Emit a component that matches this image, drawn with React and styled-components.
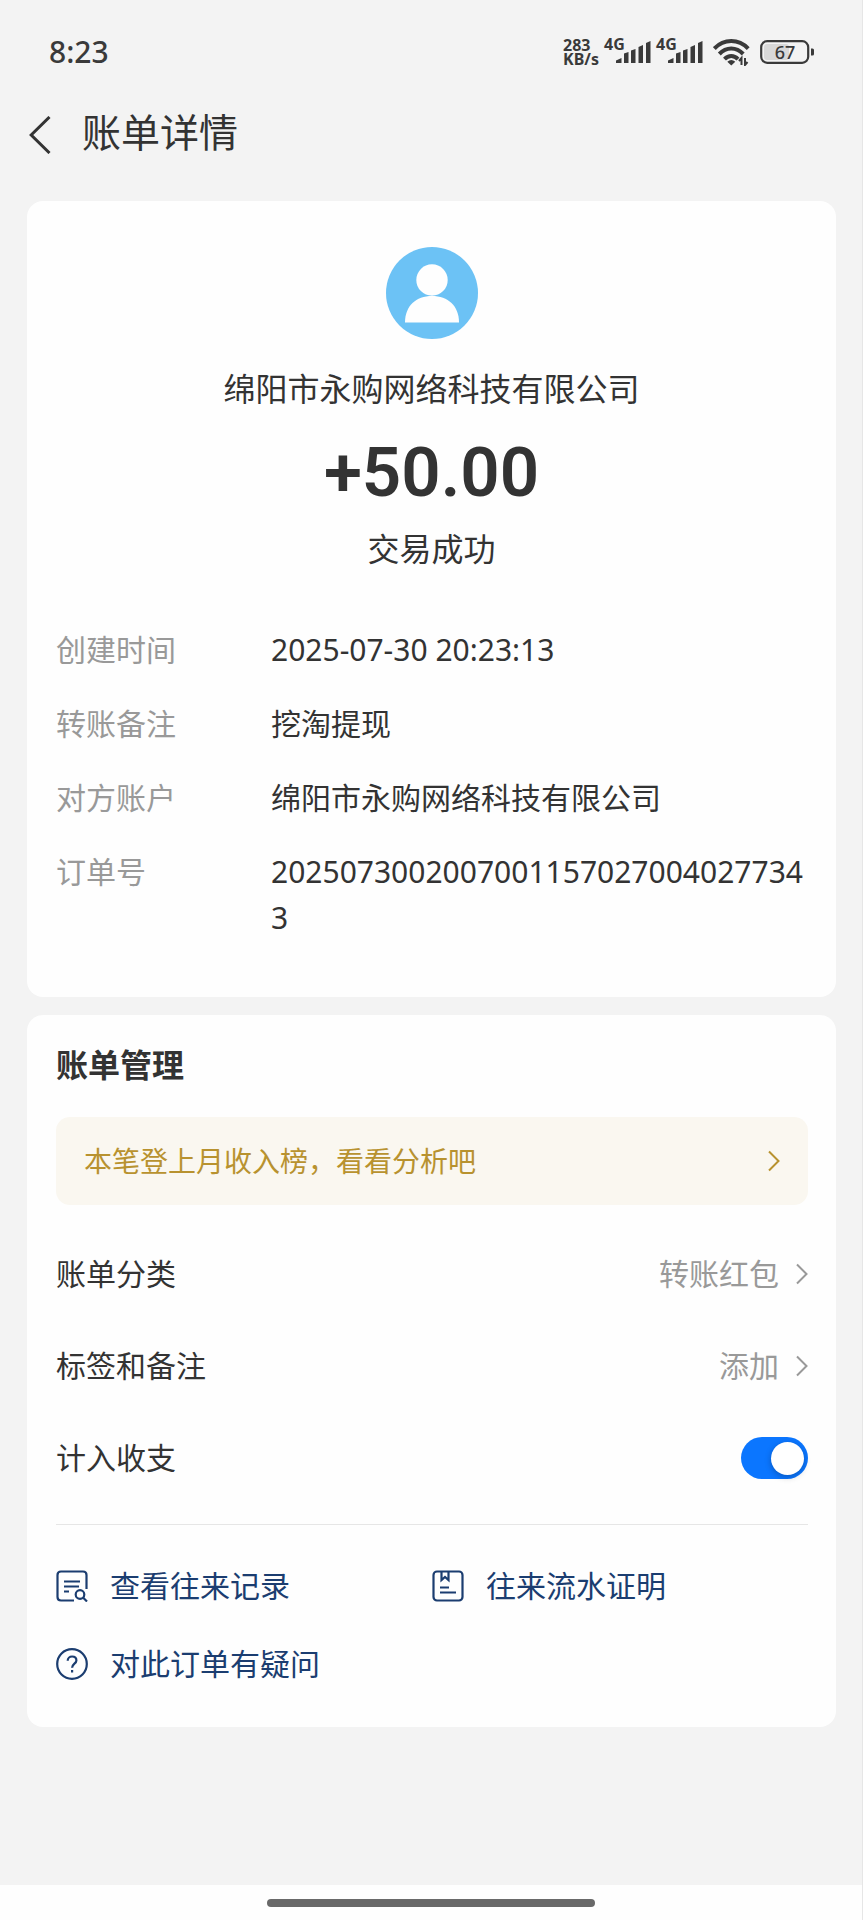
import React, { useState } from "react";
import styled, { createGlobalStyle } from "styled-components";

const COLORS = {
  page: "#f3f3f3",
  card: "#fefefe",
  text: "#333333",
  label: "#999999",
  link: "#1b3d70",
  gold: "#b8922f",
  banner: "#faf7f0",
  primary: "#0b76ff",
  line: "#e6e6e6",
  status: "#3a3a3a",
};

const details = [
  { label: "创建时间", value: "2025-07-30 20:23:13" },
  { label: "转账备注", value: "挖淘提现" },
  { label: "对方账户", value: "绵阳市永购网络科技有限公司" },
  { label: "订单号", value: "20250730020070011570270040277343" },
];

const Chevron = () => (
  <svg width="12" height="22" viewBox="0 0 12 22" fill="none" aria-hidden="true">
    <path d="M1 1.5 10.5 11 1 20.5" stroke="currentColor" strokeWidth="2" />
  </svg>
);

const BackIcon = () => (
  <svg width="22" height="38" viewBox="0 0 22 38" fill="none" aria-hidden="true">
    <path d="M20.5 1 2.2 19 20.5 37" stroke="currentColor" strokeWidth="3" />
  </svg>
);

const SignalBars = () => (
  <svg width="35" height="22" viewBox="0 0 35 22" fill={COLORS.status} aria-hidden="true">
    <path d="M0 22v-2.5L5.5 17v5z" />
    <path d="M8 22V12.5L12.5 11v11z" />
    <path d="M15 22V9.5L19.5 8v14z" />
    <path d="M22.5 22V6L27 4v18z" />
    <path d="M30 22V2L34.5 0v22z" />
  </svg>
);

const WifiIcon = () => (
  <svg width="37" height="27" viewBox="0 0 37 27" fill="none" aria-hidden="true">
    <g stroke={COLORS.status} strokeWidth="4">
      <path d="M1.3 9.6C11-.4 25.5-.4 35.2 9.6" />
      <path d="M6.3 15c6.900-7.200 17-7.200 23.900 0" />
      <path d="M11.500 20.200c4-4.200 9.500-4.200 13.500 0" />
    </g>
    <path d="M14.300 22.800q4-3.600 8 0l-4 3.700z" fill={COLORS.status} />
    <path d="M28.500 26v-7l-2.500 3M32 19v7l2.500-3" stroke={COLORS.status} strokeWidth="2" />
  </svg>
);

const BatteryShell = () => (
  <svg width="55" height="24" viewBox="0 0 55 24" fill="none" aria-hidden="true">
    <rect x="4" y="4" width="25" height="16" rx="3" fill="#d8d8d8" />
    <rect x="1.2" y="1.2" width="47" height="21.6" rx="6" stroke={COLORS.status} strokeWidth="2.2" />
    <path d="M51 8.500h1.500q1.500 0 1.500 1.500v4q0 1.500-1.500 1.500H51z" fill={COLORS.status} />
  </svg>
);

const AvatarIcon = () => (
  <svg width="92" height="92" viewBox="0 0 92 92" aria-hidden="true">
    <circle cx="46" cy="46" r="46" fill="#6cc2f5" />
    <circle cx="46" cy="33" r="15.7" fill="#fefefe" />
    <path d="M19 75.500C19 59 30 49 46 49s27 10 27 26.500z" fill="#fefefe" />
  </svg>
);

const RecordIcon = () => (
  <svg width="32" height="32" viewBox="0 0 32 32" fill="none" stroke="currentColor" strokeWidth="2.2" aria-hidden="true">
    <path d="M18 30.500H5q-3.500 0-3.500-3.500V5q0-3.500 3.500-3.500h22q3.500 0 3.500 3.500v14" />
    <path d="M8 11.500h16M8 16.500h15M8 21.500h5" />
    <circle cx="24" cy="24.5" r="4.3" />
    <path d="m27 27.500 4 4" />
  </svg>
);

const ProofIcon = () => (
  <svg width="32" height="32" viewBox="0 0 32 32" fill="none" stroke="currentColor" strokeWidth="2.2" aria-hidden="true">
    <rect x="1.5" y="1.5" width="29" height="29" rx="3.5" />
    <path d="M9.500 1.500V10l3.500-3 3.500 3V1.500M8 17.500h9M8 22.500h16" />
  </svg>
);

const QuestionIcon = () => (
  <svg width="32" height="32" viewBox="0 0 32 32" fill="none" stroke="currentColor" strokeWidth="2.2" aria-hidden="true">
    <circle cx="16" cy="16" r="14.8" />
    <path d="M11.700 12.800c0-2.600 1.900-4.300 4.400-4.300s4.300 1.600 4.300 3.900c0 3.200-4.300 3.400-4.300 7.400" />
    <path d="M16.100 22v2.500" />
  </svg>
);

const App = () => {
  const [counted, setCounted] = useState(true);

  return (
    <Page>
      <GlobalStyle />
      <StatusBar>
        <Clock>8:23</Clock>
        <StatusIcons>
          <Mobile>
            <NetSpeed>
              <span>283</span>
              <span>KB/s</span>
            </NetSpeed>
            <Signal>
              <Network>4G</Network>
              <SignalBars />
            </Signal>
            <Signal>
              <Network>4G</Network>
              <SignalBars />
            </Signal>
          </Mobile>
          <WifiIcon />
          <Battery>
            <BatteryShell />
            <BatteryLevel>67</BatteryLevel>
          </Battery>
        </StatusIcons>
      </StatusBar>

      <Header>
        <BackButton type="button" aria-label="返回">
          <BackIcon />
        </BackButton>
        <Title>账单详情</Title>
      </Header>

      <Main>
        <SummaryCard>
          <AvatarIcon />
          <Payee>绵阳市永购网络科技有限公司</Payee>
          <Amount>+50.00</Amount>
          <Result>交易成功</Result>
          <DetailList>
            {details.map(({ label, value }) => (
              <DetailRow key={label}>
                <dt>{label}</dt>
                <dd>{value}</dd>
              </DetailRow>
            ))}
          </DetailList>
        </SummaryCard>

        <ManageCard>
          <SectionTitle>账单管理</SectionTitle>
          <Banner href="#analysis">
            本笔登上月收入榜，看看分析吧
            <Chevron />
          </Banner>
          <Settings>
            <SettingButton type="button">
              账单分类
              <SettingValue>
                转账红包
                <Chevron />
              </SettingValue>
            </SettingButton>
            <SettingButton type="button">
              标签和备注
              <SettingValue>
                添加
                <Chevron />
              </SettingValue>
            </SettingButton>
            <SettingLabel htmlFor="counted">
              计入收支
              <Switch
                id="counted"
                type="checkbox"
                checked={counted}
                onChange={(event) => setCounted(event.target.checked)}
              />
            </SettingLabel>
          </Settings>
          <Links>
            <ActionLink href="#records">
              <RecordIcon />
              查看往来记录
            </ActionLink>
            <ActionLink href="#proof">
              <ProofIcon />
              往来流水证明
            </ActionLink>
            <ActionLink href="#question">
              <QuestionIcon />
              对此订单有疑问
            </ActionLink>
          </Links>
        </ManageCard>
      </Main>

      <GestureBar>
        <Handle />
      </GestureBar>
    </Page>
  );
};

const GlobalStyle = createGlobalStyle`
  *, *::before, *::after {
    box-sizing: border-box;
  }

  body {
    margin: 0;
    background: ${COLORS.page};
    color: ${COLORS.text};
    font-family: "Noto Sans", "Noto Sans CJK SC", sans-serif;
    font-size: 30px;
    line-height: 46px;
  }

  h1, h2, p, dl, dd {
    margin: 0;
  }

  button {
    border: none;
    padding: 0;
    background: none;
    color: inherit;
    font: inherit;
    cursor: pointer;
  }

  a {
    text-decoration: none;
  }

  svg {
    display: block;
    flex-shrink: 0;
  }
`;

const Page = styled.div`
  display: flex;
  flex-direction: column;
  min-height: 100vh;
  border-right: 1px solid ${COLORS.line};
`;

const StatusBar = styled.div`
  display: flex;
  align-items: center;
  justify-content: space-between;
  height: 84px;
  padding: 20px 47px 0 49px;
  color: ${COLORS.status};
`;

const Clock = styled.time`
  font-weight: 500;
`;

const StatusIcons = styled.div`
  display: flex;
  align-items: center;
  gap: 10px;
`;

const Mobile = styled.div`
  display: flex;
  align-items: center;
  gap: 5px;
`;

const NetSpeed = styled.div`
  display: flex;
  flex-direction: column;
  font-size: 16px;
  font-weight: 700;
  line-height: 14px;
`;

const Signal = styled.div`
  position: relative;
  padding-left: 12px;
`;

const Network = styled.span`
  position: absolute;
  top: -5px;
  left: 0;
  font-size: 16px;
  font-weight: 700;
  line-height: 16px;
`;

const Battery = styled.div`
  position: relative;
`;

const BatteryLevel = styled.span`
  position: absolute;
  top: 0;
  left: 0;
  width: 50px;
  text-align: center;
  font-size: 18px;
  font-weight: 500;
  line-height: 24px;
`;

const Header = styled.header`
  display: flex;
  align-items: center;
  height: 96px;
  padding: 0 29px;
  gap: 31px;
`;

const BackButton = styled.button`
  padding-top: 6px;
`;

const Title = styled.h1`
  font-size: 39px;
  font-weight: 400;
  line-height: 56px;
`;

const Main = styled.main`
  display: flex;
  flex-direction: column;
  gap: 18px;
  padding: 21px 26px 24px 27px;
`;

const Card = styled.section`
  border-radius: 16px;
  background: ${COLORS.card};
`;

const SummaryCard = styled(Card)`
  display: flex;
  flex-direction: column;
  align-items: center;
  padding: 46px 29px 56px;
`;

const Payee = styled.p`
  margin-top: 26px;
  font-size: 32px;
  line-height: 48px;
`;

const Amount = styled.p`
  margin-top: 20px;
  font-family: Roboto, sans-serif;
  font-size: 69px;
  font-weight: 600;
  line-height: 80px;
`;

const Result = styled.p`
  margin-top: 12px;
  font-size: 32px;
  line-height: 48px;
`;

const DetailList = styled.dl`
  display: flex;
  flex-direction: column;
  align-self: stretch;
  gap: 28px;
  margin-top: 54px;
`;

const DetailRow = styled.div`
  display: grid;
  grid-template-columns: 215px 1fr;

  dt {
    color: ${COLORS.label};
  }

  dd {
    min-width: 0;
    overflow-wrap: anywhere;
  }
`;

const ManageCard = styled(Card)`
  padding: 26px 28px 24px 29px;
`;

const SectionTitle = styled.h2`
  font-size: 32px;
  font-weight: 700;
  line-height: 48px;
`;

const Banner = styled.a`
  display: flex;
  align-items: center;
  justify-content: space-between;
  height: 88px;
  margin-top: 28px;
  padding: 0 28px;
  border-radius: 14px;
  background: ${COLORS.banner};
  color: ${COLORS.gold};
  font-size: 28px;
`;

const Settings = styled.div`
  margin-top: 23px;
  padding-bottom: 20px;
  border-bottom: 1px solid ${COLORS.line};
`;

const SettingButton = styled.button`
  display: flex;
  align-items: center;
  justify-content: space-between;
  width: 100%;
  height: 92px;
`;

const SettingLabel = styled.label`
  display: flex;
  align-items: center;
  justify-content: space-between;
  height: 92px;
`;

const SettingValue = styled.span`
  display: flex;
  align-items: center;
  gap: 17px;
  color: ${COLORS.label};
`;

const Switch = styled.input`
  display: flex;
  align-items: center;
  appearance: none;
  width: 67px;
  height: 42px;
  margin: 0;
  padding: 0 4px;
  border-radius: 21px;
  background: ${({ checked }) => (checked ? COLORS.primary : "#dddddd")};
  cursor: pointer;

  &::before {
    content: "";
    width: 33px;
    height: 33px;
    margin-left: ${({ checked }) => (checked ? "auto" : "0")};
    border-radius: 50%;
    background: #ffffff;
    box-shadow: 0 2px 6px rgba(0, 0, 0, 0.25);
  }
`;

const Links = styled.nav`
  display: grid;
  grid-template-columns: 1fr 1fr;
  margin-top: 22px;
`;

const ActionLink = styled.a`
  display: flex;
  align-items: center;
  gap: 22px;
  height: 78px;
  color: ${COLORS.link};
`;

const GestureBar = styled.footer`
  display: flex;
  align-items: center;
  justify-content: center;
  height: 35px;
  margin-top: auto;
  background: ${COLORS.card};
`;

const Handle = styled.div`
  width: 38%;
  height: 8px;
  border-radius: 4px;
  background: #696969;
`;

export default App;
